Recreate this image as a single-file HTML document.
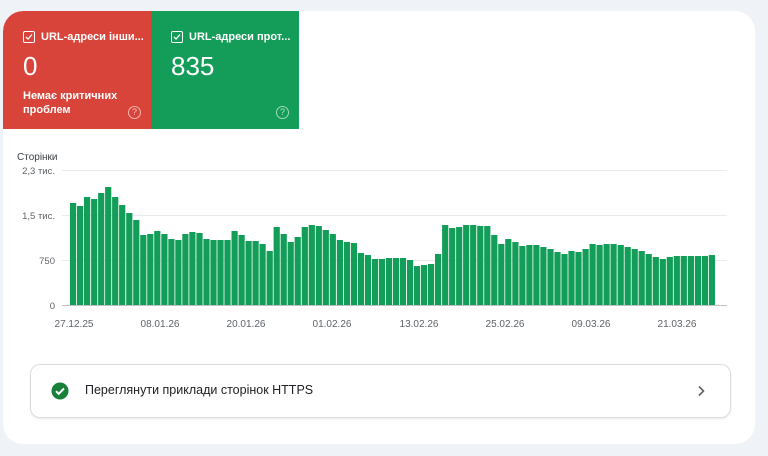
<!DOCTYPE html>
<html><head><meta charset="utf-8"><style>
html,body{margin:0;padding:0}
body{width:768px;height:456px;background:#eff3f8;position:relative;overflow:hidden;font-family:"Liberation Sans",sans-serif}
.card{position:absolute;left:3px;top:11px;width:752px;height:433px;background:#fff;border-radius:20px;overflow:hidden}
.tile{position:absolute;top:0;height:118px;width:148px;color:#fff}
.red{left:0;background:#d9443a;border-top-left-radius:20px}
.green{left:148px;background:#139d58}
.t1{position:absolute;left:20px;top:20px;font-size:11px;font-weight:bold;white-space:nowrap;display:flex;align-items:center}
.cb{width:10px;height:10px;border:1.3px solid #fff;border-radius:2px;margin-right:6px;position:relative}
.num{position:absolute;left:20px;top:40px;font-size:26px}
.sub{position:absolute;left:20px;top:78px;font-size:11px;font-weight:bold;line-height:14px}
.q{position:absolute;right:10px;bottom:10px;width:11px;height:11px;border:1px solid rgba(255,255,255,.6);border-radius:50%;font-size:9px;text-align:center;line-height:11px;color:rgba(255,255,255,.7)}
.btn{position:absolute;left:27px;top:353px;width:699px;height:52px;border:1px solid #dadce0;border-radius:10px;box-shadow:0 1px 2px rgba(0,0,0,.08)}
</style></head><body>
<div class="card">
 <div class="tile red"><div class="t1"><span class="cb"><svg width="10" height="10" style="position:absolute;left:0;top:0"><path d="M2 5l2 2 4-4.5" stroke="#fff" stroke-width="1.3" fill="none"/></svg></span>URL-адреси інши...</div><div class="num">0</div><div class="sub">Немає критичних<br>проблем</div><div class="q">?</div></div>
 <div class="tile green"><div class="t1"><span class="cb"><svg width="10" height="10" style="position:absolute;left:0;top:0"><path d="M2 5l2 2 4-4.5" stroke="#fff" stroke-width="1.3" fill="none"/></svg></span>URL-адреси прот...</div><div class="num">835</div><div class="q">?</div></div>
 <div class="btn">
  <svg width="18" height="18" style="position:absolute;left:20px;top:17px"><circle cx="9" cy="9" r="8.5" fill="#188038"/><path d="M5 9.2l2.7 2.6L13 6.5" stroke="#fff" stroke-width="2" fill="none"/></svg>
  <div style="position:absolute;left:54px;top:18px;font-size:12.5px;color:#202124">Переглянути приклади сторінок HTTPS</div>
  <svg width="10" height="12" style="position:absolute;left:665px;top:20px"><path d="M3 1.5l4.5 4.5L3 10.5" stroke="#5f6368" stroke-width="1.6" fill="none"/></svg>
 </div>
</div>
<svg width="768" height="456" style="position:absolute;left:0;top:0">
<g font-family="Liberation Sans,sans-serif" font-size="9.5" fill="#5f6368">
<text x="17" y="160" fill="#3c4043" font-size="10">Сторінки</text>
<text x="55" y="174" text-anchor="end">2,3 тис.</text>
<text x="55" y="219" text-anchor="end">1,5 тис.</text>
<text x="55" y="264" text-anchor="end">750</text>
<text x="55" y="309" text-anchor="end">0</text>
<g font-size="10" text-anchor="middle">
<text x="74" y="327">27.12.25</text><text x="160" y="327">08.01.26</text><text x="246" y="327">20.01.26</text><text x="332" y="327">01.02.26</text><text x="419" y="327">13.02.26</text><text x="505" y="327">25.02.26</text><text x="591" y="327">09.03.26</text><text x="677" y="327">21.03.26</text>
</g></g>
<g stroke="#e8eaed" stroke-width="1"><line x1="62" y1="170.5" x2="727" y2="170.5"/><line x1="62" y1="215.5" x2="727" y2="215.5"/><line x1="62" y1="260.5" x2="727" y2="260.5"/></g>
<line x1="62" y1="305.5" x2="727" y2="305.5" stroke="#bdc1c6"/>
<g fill="#129d58">
<rect x="70" y="203" width="6.2" height="102"/><rect x="77" y="206" width="6.2" height="99"/><rect x="84" y="197" width="6.2" height="108"/><rect x="91.1" y="199" width="6.2" height="106"/><rect x="98.1" y="193" width="6.2" height="112"/><rect x="105.1" y="187" width="6.2" height="118"/><rect x="112.1" y="197" width="6.2" height="108"/><rect x="119.1" y="205" width="6.2" height="100"/><rect x="126.2" y="213" width="6.2" height="92"/><rect x="133.2" y="220" width="6.2" height="85"/>
<rect x="140.2" y="235" width="6.2" height="70"/><rect x="147.2" y="234" width="6.2" height="71"/><rect x="154.2" y="231" width="6.2" height="74"/><rect x="161.3" y="234" width="6.2" height="71"/><rect x="168.3" y="239" width="6.2" height="66"/><rect x="175.3" y="240" width="6.2" height="65"/><rect x="182.3" y="234" width="6.2" height="71"/><rect x="189.3" y="232" width="6.2" height="73"/><rect x="196.4" y="233" width="6.2" height="72"/><rect x="203.4" y="239" width="6.2" height="66"/>
<rect x="210.4" y="240" width="6.2" height="65"/><rect x="217.4" y="240" width="6.2" height="65"/><rect x="224.4" y="240" width="6.2" height="65"/><rect x="231.5" y="231" width="6.2" height="74"/><rect x="238.5" y="235" width="6.2" height="70"/><rect x="245.5" y="241" width="6.2" height="64"/><rect x="252.5" y="241" width="6.2" height="64"/><rect x="259.5" y="244" width="6.2" height="61"/><rect x="266.6" y="251" width="6.2" height="54"/><rect x="273.6" y="227" width="6.2" height="78"/>
<rect x="280.6" y="234" width="6.2" height="71"/><rect x="287.6" y="242" width="6.2" height="63"/><rect x="294.6" y="237" width="6.2" height="68"/><rect x="301.7" y="227" width="6.2" height="78"/><rect x="308.7" y="225" width="6.2" height="80"/><rect x="315.7" y="226" width="6.2" height="79"/><rect x="322.7" y="230" width="6.2" height="75"/><rect x="329.7" y="234" width="6.2" height="71"/><rect x="336.8" y="240" width="6.2" height="65"/><rect x="343.8" y="242" width="6.2" height="63"/>
<rect x="350.8" y="243" width="6.2" height="62"/><rect x="357.8" y="253" width="6.2" height="52"/><rect x="364.8" y="255" width="6.2" height="50"/><rect x="371.9" y="259" width="6.2" height="46"/><rect x="378.9" y="259" width="6.2" height="46"/><rect x="385.9" y="258" width="6.2" height="47"/><rect x="392.9" y="258" width="6.2" height="47"/><rect x="399.9" y="258" width="6.2" height="47"/><rect x="407" y="260" width="6.2" height="45"/><rect x="414" y="266" width="6.2" height="39"/>
<rect x="421" y="265" width="6.2" height="40"/><rect x="428" y="264" width="6.2" height="41"/><rect x="435" y="254" width="6.2" height="51"/><rect x="442.1" y="225" width="6.2" height="80"/><rect x="449.1" y="228" width="6.2" height="77"/><rect x="456.1" y="227" width="6.2" height="78"/><rect x="463.1" y="225" width="6.2" height="80"/><rect x="470.1" y="225" width="6.2" height="80"/><rect x="477.2" y="226" width="6.2" height="79"/><rect x="484.2" y="226" width="6.2" height="79"/>
<rect x="491.2" y="235" width="6.2" height="70"/><rect x="498.2" y="244" width="6.2" height="61"/><rect x="505.2" y="239" width="6.2" height="66"/><rect x="512.3" y="242" width="6.2" height="63"/><rect x="519.3" y="246" width="6.2" height="59"/><rect x="526.3" y="245" width="6.2" height="60"/><rect x="533.3" y="245" width="6.2" height="60"/><rect x="540.3" y="247" width="6.2" height="58"/><rect x="547.4" y="249" width="6.2" height="56"/><rect x="554.4" y="252" width="6.2" height="53"/>
<rect x="561.4" y="254" width="6.2" height="51"/><rect x="568.4" y="251" width="6.2" height="54"/><rect x="575.4" y="252" width="6.2" height="53"/><rect x="582.5" y="249" width="6.2" height="56"/><rect x="589.5" y="244" width="6.2" height="61"/><rect x="596.5" y="245" width="6.2" height="60"/><rect x="603.5" y="244" width="6.2" height="61"/><rect x="610.5" y="244" width="6.2" height="61"/><rect x="617.6" y="245" width="6.2" height="60"/><rect x="624.6" y="247" width="6.2" height="58"/>
<rect x="631.6" y="249" width="6.2" height="56"/><rect x="638.6" y="251" width="6.2" height="54"/><rect x="645.6" y="254" width="6.2" height="51"/><rect x="652.7" y="257" width="6.2" height="48"/><rect x="659.7" y="259" width="6.2" height="46"/><rect x="666.7" y="257" width="6.2" height="48"/><rect x="673.7" y="256" width="6.2" height="49"/><rect x="680.7" y="256" width="6.2" height="49"/><rect x="687.8" y="256" width="6.2" height="49"/><rect x="694.8" y="256" width="6.2" height="49"/>
<rect x="701.8" y="256" width="6.2" height="49"/><rect x="708.8" y="255" width="6.2" height="50"/>
</g>
</svg>
</body></html>
